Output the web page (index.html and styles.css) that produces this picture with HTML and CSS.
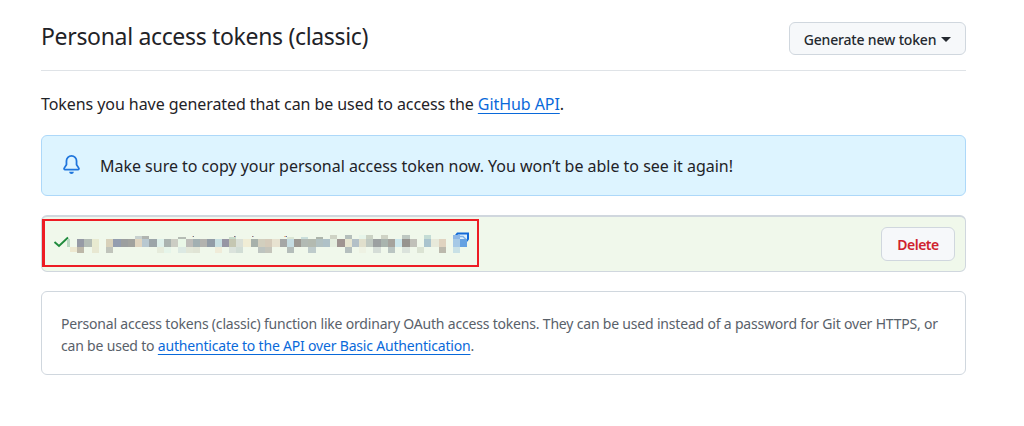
FILE: index.html
```
<!DOCTYPE html>
<html lang="en">
<head>
<meta charset="utf-8">
<title>Personal access tokens (classic)</title>
<link rel="stylesheet" href="styles.css">
</head>
<body>
<main class="page">
  <header class="subhead">
    <h1 class="title">Personal access tokens (classic)</h1>
    <button class="btn generate"><span>Generate new token</span><i class="caret"></i></button>
  </header>
  <p class="intro">Tokens you have generated that can be used to access the <a class="link" href="#">GitHub API</a>.</p>
  <div class="flash">
    <svg class="bell" viewBox="0 0 16 16" width="19" height="19"><path d="M8 16a2 2 0 0 0 1.985-1.75c.017-.137-.097-.25-.235-.25h-3.500c-.138 0-.252.113-.235.250A2 2 0 0 0 8 16ZM3 5a5 5 0 0 1 10 0v2.947c0 .050.015.098.042.139l1.703 2.555A1.519 1.519 0 0 1 13.482 13H2.518a1.516 1.516 0 0 1-1.263-2.360l1.703-2.554A.255.255 0 0 0 3 7.947Zm5-3.500A3.500 3.500 0 0 0 4.500 5v2.947c0 .346-.102.683-.294.970l-1.703 2.556a.017.017 0 0 0-.003.010l.001.006.004.006.006.004.007.001h10.964l.007-.001.006-.004.004-.006.001-.007a.017.017 0 0 0-.003-.010l-1.703-2.554a1.745 1.745 0 0 1-.294-.970V5A3.500 3.500 0 0 0 8 1.500Z"/></svg>
    <span class="flash-text">Make sure to copy your personal access token now. You won’t be able to see it again!</span>
  </div>
  <div class="token">
    <div class="highlight">
      <svg class="token-art" width="432" height="44" viewBox="45 221 432 44">
        <path class="check" d="M54.500 242l4.500 4 9-8.500"/>
        <g class="copy"><path d="M455.500 239v-3l2-2.500h10.500v5.500l-1 1.500h-10z"/><path class="copy-shade" d="M457 236.500h6l4 4"/></g>
        <g id="mosaic" shape-rendering="crispEdges"></g>
      </svg>
    </div>
    <button class="btn delete">Delete</button>
  </div>
  <div class="note">
    <p><span class="line">Personal access tokens (classic) function like ordinary OAuth access tokens. They can be used instead of a password for Git over HTTPS, or</span>
    <span class="line">can be used to <a class="link" href="#">authenticate to the API over Basic Authentication</a>.</span></p>
  </div>
</main>
<script src="mosaic.js"></script>
</body>
</html>
```
FILE: styles.css
```
* { box-sizing: border-box; }
body { margin: 0; background: #fff; color: #1f2328; font-family: "Noto Sans", "Open Sans", sans-serif; }
.page { width: 925px; margin: 0 0 0 41px; }
.subhead { display: flex; justify-content: space-between; height: 71px; padding-top: 18px; border-bottom: 1px solid #dfe3e7; }
.title { margin: 0; font-size: 23px; line-height: 36px; font-weight: 400; letter-spacing: -0.33px; white-space: nowrap; }
.btn { font-family: inherit; background: #f6f8fa; border: 1px solid #d0d7de; border-radius: 6px; padding: 0; display: flex; align-items: center; justify-content: center; }
.generate { width: 177px; height: 33px; margin-top: 4px; padding-top: 1px; gap: 5px; color: #24292f; font-size: 14px; font-weight: 500; letter-spacing: -0.17px; white-space: nowrap; }
.caret { border: 5px solid transparent; border-top-color: #24292f; border-bottom: 0; }
.intro { margin: 20px 0 0; font-size: 16px; line-height: 26px; letter-spacing: -0.07px; white-space: nowrap; }
.link { color: #0969da; text-decoration: underline 1px; text-underline-offset: 3px; text-decoration-skip-ink: none; }
.flash { display: flex; align-items: center; height: 61px; margin-top: 18px; padding-left: 20px; background: #ddf4ff; border: 1px solid #add8f9; border-radius: 6px; }
.bell { fill: #1f75dc; margin-bottom: 3px; }
.flash-text { margin-left: 19px; font-size: 16px; letter-spacing: -0.02px; white-space: nowrap; }
.token { display: flex; align-items: flex-start; justify-content: space-between; height: 57px; margin-top: 19px; padding: 2px 10px 0 0; background: #f0f8eb; border: 1px solid #d0d7de; border-top-width: 2px; border-radius: 6px; }
.highlight { width: 437px; height: 48px; border: 2px solid #ed1c24; border-left-width: 3px; }
.token-art { display: block; }
.check { fill: none; stroke: #1f8b3d; stroke-width: 1.9; }
.copy path { fill: #dceffc; stroke: #1069d8; stroke-width: 2; }
.copy .copy-shade { fill: none; stroke: #7fb2e8; stroke-width: 1.5; }
.delete { width: 74px; height: 34px; margin-top: 8px; padding-top: 1px; color: #cf222e; font-size: 14px; font-weight: 600; letter-spacing: -0.5px; }
.note { height: 84px; margin-top: 19px; padding: 21px 0 0 19px; border: 1px solid #d0d7de; border-radius: 6px; color: #59616a; font-size: 14px; line-height: 22px; }
.note p { margin: 0; }
.line { display: block; white-space: nowrap; letter-spacing: -0.19px; }
```
FILE: mosaic.js
```
// Each column: [top, middle, bottom] colours of the redacted token.
const columns = [
  ",b9d8c1,ede8d0", ",969aa5,bdb8a9", ",b4bdb6,", ",e8ead0,e8e8d2", ",,", ",d8d1ba,c0c4bb",
  ",939daf,", ",9c9f9f,", ",a1a29e,", "c8d1cf,e0d5c0,", "b0b4b0,b8c8d0,", ",9ca5a9,",
  ",def0ea,e6ecdc", ",aab3b0,e6f5ea", ",cccdc4,", "b5bcb4,e9f7e7,dce9e3", ",bebdb9,e2e7d8",
  ",a2b0b2,e0e4d5", ",b3b3af,", ",929ca6,", ",c9e0e2,f0ecd9", ",9796a4,", "c7dac9,c5c7b2,dbe3dc",
  ",dae0d7,d1ddd5", ",f0edd5,", ",a7b1ab,", ",d2cfbe,bdc4c0", ",d5cbba,c5c5bb", ",e7e2d0,",
  ",a5a7a6,", "dbe7d5,c5dce1,b4bdba", ",9c9993,", "c9dedb,b2bab4,", ",b3bab0,becbcb",
  "adb5ab,b2c1c1,", ",afc1c7,", "cfd3c5,e4edde,", ",9f9491,", "b5bfbc,e6e5d0,b5bfbe",
  ",b3c0c7,", "e7f5ea,e0dfcc,eef2e3", "cbd2c4,c0c9c1,", ",9ca0a1,d5ddd7", "cfd3c5,a9b4ae,",
  ",a5a39d,bac5c2", ",cde7ec,", "bec8c2,96938f,dbe3dc", ",c1c1ba,", ",,dbe3d3",
  "c4dcd5,aac4ce,", ",e7e9da,", ",e0d3c0,bcb9ad", ",,", "8db7e6,a6c9e6,c9e1e6", ",66a2e2,"
];
const mosaic = document.getElementById("mosaic");
function cell(x, y, w, h, fill) {
  const rect = document.createElementNS("http://www.w3.org/2000/svg", "rect");
  Object.entries({ x, y, width: w, height: h, fill }).forEach(([k, v]) => rect.setAttribute(k, v));
  mosaic.appendChild(rect);
}
columns.forEach((column, i) => {
  const x = Math.round(70 + i * 7.226);
  const w = Math.round(70 + (i + 1) * 7.226) - x;
  const [top, middle, bottom] = column.split(",");
  const topY = i > 13 && i < 36 ? 237 : i < 14 ? 236 : 235;
  if (top) cell(x, topY, w, 239 - topY, "#" + top);
  if (middle) cell(i ? x : 67, 239, i ? w : 3, 8, "#" + middle);
  if (bottom) cell(x, 247, w, i ? 6 : 5, "#" + bottom);
});
// Tips of letters left above the blurred band.
[[192, "#e6c4a5"], [193, "#667b96"], [234, "#9b6e68"], [235, "#91a8c8"],
 [252, "#a67a70"], [253, "#a1b6d1"], [284, "#e6c690"], [285, "#dc9d88"], [286, "#5b73ad"]]
  .forEach(([x, fill]) => cell(x, 236, 1, 1, fill));
```
